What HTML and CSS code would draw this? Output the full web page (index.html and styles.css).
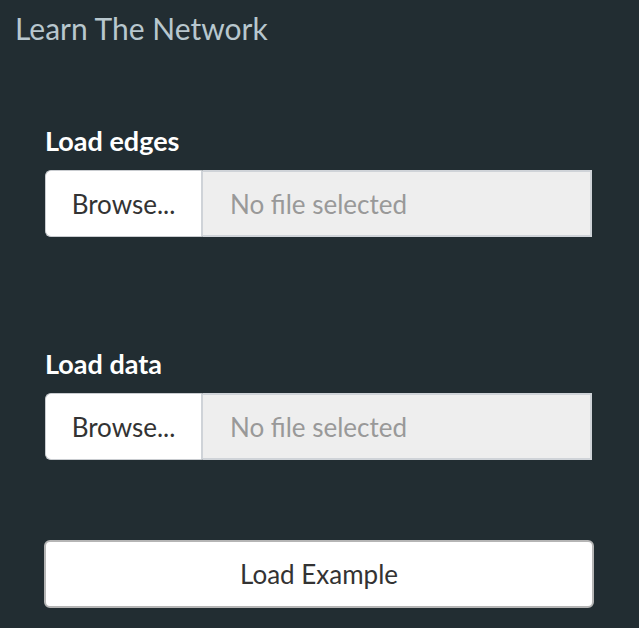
FILE: index.html
```html
<!DOCTYPE html>
<html>
<head>
<meta charset="utf-8">
<link rel="stylesheet" href="styles.css">
</head>
<body>
<div class="sidebar">
  <h1 class="title">Learn The Network</h1>
  <div class="form">
    <div class="group group-first">
      <label class="label">Load edges</label>
      <div class="file">
        <span class="browse">Browse...</span>
        <span class="name">No file selected</span>
      </div>
    </div>
    <div class="group group-second">
      <label class="label">Load data</label>
      <div class="file">
        <span class="browse">Browse...</span>
        <span class="name">No file selected</span>
      </div>
    </div>
    <button class="btn">Load Example</button>
  </div>
</div>
</body>
</html>
```

FILE: styles.css
```css
html, body {
  margin: 0;
  padding: 0;
  background: #222d32;
  height: 100%;
}
body {
  font-family: Lato, "Noto Sans", sans-serif;
  overflow: hidden;
}
.sidebar {
  width: 639px;
  height: 628px;
}
.title {
  margin: 0;
  padding: 10px 0 0 15px;
  font-size: 30px;
  font-weight: 400;
  color: #b8c7ce;
  line-height: 36px;
}
.form {
  padding: 0 47px 0 45px;
}
.group-first {
  margin-top: 80px;
}
.group-second {
  margin-top: 112px;
}
.label {
  display: block;
  color: #ffffff;
  font-weight: 700;
  font-size: 27px;
  line-height: 30px;
  margin-bottom: 14px;
}
.file {
  display: flex;
  height: 67px;
  box-sizing: border-box;
}
.browse {
  width: 158px;
  box-sizing: border-box;
  background: #ffffff;
  border: 1px solid #c9ccd0;
  border-right: 2px solid #cfd3d8;
  border-radius: 6px 0 0 6px;
  display: flex;
  align-items: center;
  justify-content: center;
  font-size: 26px;
  color: #333333;
}
.name {
  flex: 1;
  background: #eeeeee;
  border: 2px solid #cfd3d8;
  border-left: none;
  display: flex;
  align-items: center;
  padding-left: 27px;
  font-size: 26px;
  color: #999999;
}
.btn {
  display: block;
  margin-top: 80px;
  margin-left: -1px;
  width: 550px;
  height: 68px;
  background: #ffffff;
  border: 2px solid #b5b5b5;
  border-radius: 6px;
  font-family: inherit;
  font-size: 26px;
  color: #333333;
  padding: 0;
}
```
